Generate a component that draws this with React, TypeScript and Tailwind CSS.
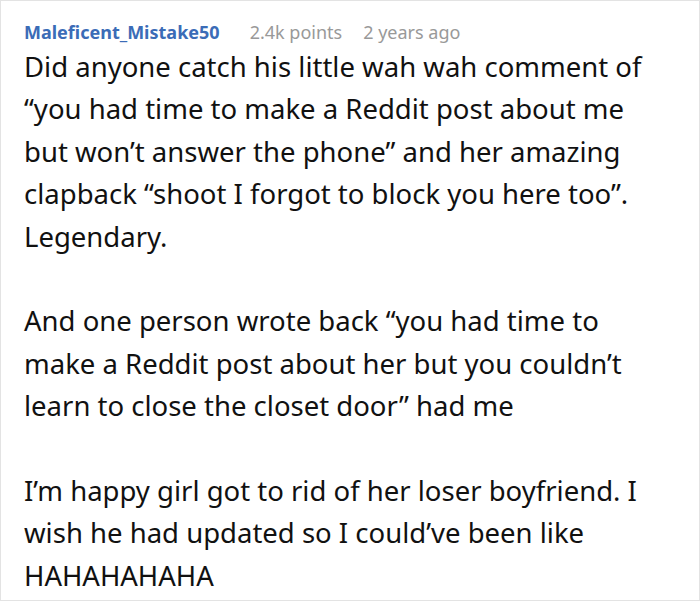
export default function App() {
  return (
    <div className="w-[700px] h-[601px] border border-[#e3e3e3] bg-white px-[23px] pt-[17px] overflow-hidden" style={{ fontFamily: '"Noto Sans", sans-serif' }}>
      <div className="flex items-baseline text-[18px] leading-[28px]">
        <span className="font-bold text-[#3b6cb7]">Maleficent_Mistake50</span>
        <span className="text-[#999999] ml-[30px]">2.4k points</span>
        <span className="text-[#999999] ml-[21px]">2 years ago</span>
      </div>
      <div className="text-[27.5px] leading-[42.4px] text-[#111] flex flex-col gap-[42.4px] pr-[20px]">
        <p>Did anyone catch his little wah wah comment of “you had time to make a Reddit post about me but won’t answer the phone” and her amazing clapback “shoot I forgot to block you here too”. Legendary.</p>
        <p>And one person wrote back “you had time to make a Reddit post about her but you couldn’t learn to close the closet door” had me</p>
        <p>I’m happy girl got to rid of her loser boyfriend. I wish he had updated so I could’ve been like HAHAHAHAHA</p>
      </div>
    </div>
  );
}
